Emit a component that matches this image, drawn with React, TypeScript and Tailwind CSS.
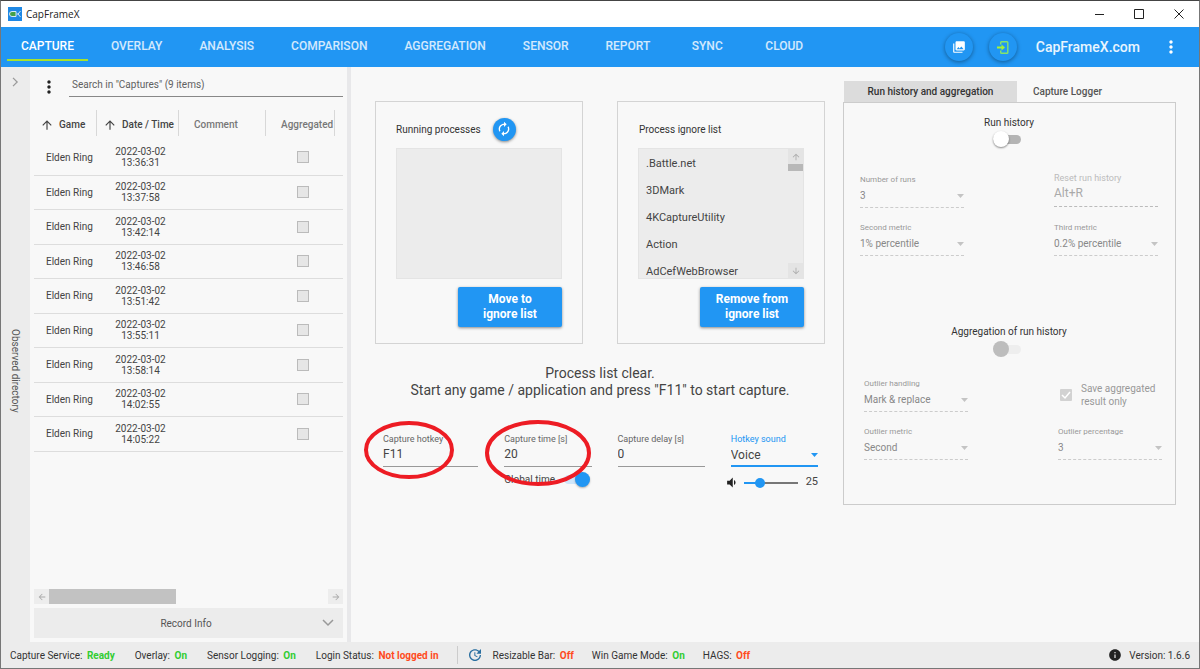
import React from "react";
import {
  MdArrowBack,
  MdArrowDownward,
  MdArrowForward,
  MdArrowUpward,
  MdAutorenew,
  MdInfo,
  MdMoreVert,
  MdPhotoLibrary,
  MdUpdate,
  MdVolumeDown,
} from "react-icons/md";

const tabs = ["Capture", "Overlay", "Analysis", "Comparison", "Aggregation", "Sensor", "Report", "Sync", "Cloud"];

const captureTimes = [
  "13:36:31",
  "13:37:58",
  "13:42:14",
  "13:46:58",
  "13:51:42",
  "13:55:11",
  "13:58:14",
  "14:02:55",
  "14:05:22",
];

const ignoreList = [".Battle.net", "3DMark", "4KCaptureUtility", "Action", "AdCefWebBrowser"];

const blueButton =
  "ml-auto mt-2 h-10 w-[104px] rounded-[2px] bg-[#2196f3] text-xs leading-[15px] font-bold text-white shadow-[0_1px_3px_rgba(0,0,0,0.45)]";

const roundButton =
  "flex size-7 items-center justify-center rounded-full bg-[#2196f3] shadow-[0_1px_4px_rgba(0,0,0,0.4)]";

function TitleBar() {
  return (
    <header className="flex h-[26px] shrink-0 items-center bg-white pr-[11px] pl-[7px]">
      <svg viewBox="0 0 28 28" className="size-[14px]" aria-hidden="true">
        <rect width="28" height="28" fill="#1e88e5" />
        <path d="M16 9H8a5 5 0 0 0 0 10h8" fill="#43a047" stroke="#d5e8f7" strokeWidth="2" />
        <path d="M16 9v10M17 14h3M25 8l-5 6 5 6" fill="none" stroke="#d5e8f7" strokeWidth="2" />
      </svg>
      <h1 className="ml-1 font-['Open_Sans',sans-serif] text-[10px] text-[#222]">CapFrameX</h1>
      <div className="ml-auto flex items-center gap-[22px] text-[#222]">
        <button aria-label="Minimize" className="flex size-[18px] items-center justify-center">
          <svg viewBox="0 0 10 10" className="size-[10px]" stroke="currentColor">
            <path d="M1 5.5h9" />
          </svg>
        </button>
        <button aria-label="Maximize" className="flex size-[18px] items-center justify-center">
          <svg viewBox="0 0 10 10" className="size-[10px]" fill="none" stroke="currentColor">
            <path d="M.5 .5h9v9h-9z" />
          </svg>
        </button>
        <button aria-label="Close" className="flex size-[18px] items-center justify-center">
          <svg viewBox="0 0 10 10" className="size-[10px]" stroke="currentColor">
            <path d="M.5 .5l9 9M9.500 .5l-9 9" />
          </svg>
        </button>
      </div>
    </header>
  );
}

function NavBar() {
  return (
    <nav className="flex h-10 shrink-0 items-center bg-[#2196f3] pr-[18px] pl-[6px] text-white">
      <div className="flex gap-[9px]">
        {tabs.map((tab, i) => (
          <button
            key={tab}
            className={`h-7 min-w-[68px] border-b-2 px-[14px] text-xs font-medium uppercase ${
              i === 0 ? "border-[#a6e22e]" : "border-transparent text-white/80"
            }`}
          >
            {tab}
          </button>
        ))}
      </div>
      <div className="ml-auto flex items-center">
        <button aria-label="Screenshots" className={roundButton}>
          <MdPhotoLibrary className="size-[14px]" />
        </button>
        <button aria-label="Login" className={`ml-4 text-[#a6f432] ${roundButton}`}>
          <svg viewBox="0 0 12 13" className="h-[13px] w-3" fill="none" stroke="currentColor">
            <path d="M3.700 3.500V1.500q0-.8.8-.8h5.500q.8 0 .8.8v10q0 .8-.8.8H4.500q-.8 0-.8-.8V9.500" stroke="#86e46a" strokeWidth="1.400" />
            <path d="M0 6.500h5.500" strokeWidth="2" />
            <path d="M4.500 3.500v6l3.500-3z" fill="currentColor" stroke="none" />
          </svg>
        </button>
        <a href="#site" className="ml-[19px] text-sm font-medium text-white/90">
          CapFrameX.com
        </a>
        <button aria-label="More" className="ml-[21px]">
          <MdMoreVert className="size-5" />
        </button>
      </div>
    </nav>
  );
}

function ColumnHead({ label, sorted, pad }: { label: string; sorted?: boolean; pad: string }) {
  return (
    <th className="p-0 font-medium">
      <div
        className={`flex h-[26px] items-center gap-[5px] border-r border-[#d8d8d8] pt-1 whitespace-nowrap ${pad} ${
          sorted ? "text-[#444]" : "text-[#777]"
        }`}
      >
        {sorted ? <MdArrowUpward className="size-[14px] shrink-0" /> : null}
        {label}
      </div>
    </th>
  );
}

function CaptureList() {
  return (
    <section className="flex w-[317px] shrink-0 flex-col px-1 pb-1">
      <div className="flex h-[30px] items-end pl-[5px]">
        <button aria-label="List options" className="text-[#222]">
          <MdMoreVert className="size-5" />
        </button>
        <input
          aria-label="Search captures"
          placeholder={'Search in "Captures" (9 items)'}
          className="ml-[10px] h-6 min-w-0 flex-1 border-b border-[#888] px-[3px] text-[10px] outline-none placeholder:text-[#606060]"
        />
      </div>
      <table className="mt-2 w-full table-fixed border-collapse text-[#444]">
        <colgroup>
          <col className="w-[63px]" />
          <col className="w-[82px]" />
          <col className="w-[87px]" />
          <col className="w-[69px]" />
          <col />
        </colgroup>
        <thead>
          <tr className="h-[35px] text-left text-[10px]">
            <ColumnHead label="Game" sorted pad="pl-[6px]" />
            <ColumnHead label="Date / Time" sorted pad="pl-[6px]" />
            <ColumnHead label="Comment" pad="pl-[15px]" />
            <ColumnHead label="Aggregated" pad="pl-[15px]" />
            <th />
          </tr>
        </thead>
        <tbody>
          {captureTimes.map((time) => (
            <tr key={time} className="border-b border-[#ddd] text-[10px] leading-[11px] odd:h-[35px] even:h-[34px]">
              <td className="p-0 pl-3">Elden Ring</td>
              <td className="p-0 pl-[5px] text-center">
                2022-03-02
                <br />
                {time}
              </td>
              <td />
              <td className="p-0 pl-[31px]">
                <input
                  type="checkbox"
                  aria-label={`Aggregated ${time}`}
                  className="block size-3 appearance-none border border-[#bbb] bg-[#e6e6e6]"
                />
              </td>
              <td />
            </tr>
          ))}
        </tbody>
      </table>
      <div className="mt-auto flex h-[15px] bg-[#f8f8f8] text-[#aaa]">
        <button aria-label="Scroll left" className="flex w-[15px] items-center justify-center bg-[#ededed]">
          <MdArrowBack className="size-[10px]" />
        </button>
        <div className="w-[127px] bg-[#c2c2c2]" />
        <button aria-label="Scroll right" className="ml-auto flex w-[15px] items-center justify-center bg-[#ededed]">
          <MdArrowForward className="size-[10px]" />
        </button>
      </div>
      <button className="mt-1 flex h-[30px] items-center bg-[#ececec] pr-[9px] pl-4 text-[10px] text-[#555]">
        <span className="flex-1">Record Info</span>
        <svg viewBox="0 0 12 8" className="h-2 w-3" fill="none" stroke="#999" strokeWidth="1.500">
          <path d="M1 1l5 5 5-5" />
        </svg>
      </button>
    </section>
  );
}

function RunningProcesses() {
  return (
    <section className="flex flex-col border border-[#d4d4d4] px-5 pt-3 pb-4">
      <div className="flex h-[30px] items-center gap-3">
        <h2 className="pt-px text-[10px] text-[#333]">Running processes</h2>
        <button
          aria-label="Refresh"
          className="flex size-[23px] items-center justify-center rounded-full bg-[#2196f3] text-white shadow-[0_1px_3px_rgba(0,0,0,0.45)]"
        >
          <MdAutorenew className="size-4" />
        </button>
      </div>
      <div className="mt-1 h-[131px] border border-[#e4e4e4] bg-[#ececec]" />
      <button className={blueButton}>
        Move to
        <br />
        ignore list
      </button>
    </section>
  );
}

function IgnoreList() {
  return (
    <section className="flex flex-col border border-[#d4d4d4] px-5 pt-3 pb-4">
      <h2 className="flex h-[30px] items-center pt-px pl-px text-[10px] text-[#333]">Process ignore list</h2>
      <div className="mt-1 flex h-[131px] overflow-hidden border border-[#e4e4e4] bg-[#ececec]">
        <ul className="flex-1 pt-[2px] pl-[7px] text-[11px] text-[#444]">
          {ignoreList.map((name) => (
            <li key={name} className="flex h-[27px] items-center">
              {name}
            </li>
          ))}
        </ul>
        <div className="flex w-[15px] flex-col text-[#aaa]">
          <button aria-label="Scroll up" className="flex h-[15px] items-center justify-center bg-[#e4e4e4]">
            <MdArrowUpward className="size-[10px]" />
          </button>
          <div className="h-[7px] bg-[#b8b8b8]" />
          <button aria-label="Scroll down" className="mt-auto flex h-[15px] items-center justify-center bg-[#e4e4e4]">
            <MdArrowDownward className="size-[10px]" />
          </button>
        </div>
      </div>
      <button className={blueButton}>
        Remove from
        <br />
        ignore list
      </button>
    </section>
  );
}

function TextField({ id, label, value }: { id: string; label: string; value: string }) {
  return (
    <div className="min-w-0">
      <label htmlFor={id} className="block text-[9px] leading-3 whitespace-nowrap text-[#666]">
        {label}
      </label>
      <input
        id={id}
        defaultValue={value}
        className="block h-[22px] w-full border-b border-[#999] pb-1 text-xs text-[#444] outline-none"
      />
    </div>
  );
}

// red marker drawn around a field
function Marker({ className, rx, ry }: { className: string; rx: number; ry: number }) {
  return (
    <svg
      className={`pointer-events-none absolute ${className}`}
      width={rx * 2 + 6}
      height={ry * 2 + 6}
      fill="none"
      stroke="#ed1c24"
      strokeWidth="4"
    >
      <ellipse cx={rx + 3} cy={ry + 3} rx={rx} ry={ry} />
    </svg>
  );
}

function CaptureSettings() {
  return (
    <div className="mt-[34px] grid grid-cols-[minmax(0,95fr)_minmax(0,87fr)_minmax(0,87fr)_minmax(0,87fr)] gap-[26px] pr-[7px] pl-2">
      <div className="relative">
        <TextField id="hotkey" label="Capture hotkey" value="F11" />
        <Marker className="-top-[13px] -left-5" rx={43} ry={27} />
      </div>
      <div className="relative">
        <TextField id="time" label="Capture time [s]" value="20" />
        <label className="mt-1 flex h-[17px] items-center justify-between pr-[2px] text-[10px] whitespace-nowrap text-[#444]">
          Global time
          <input
            type="checkbox"
            defaultChecked
            className="relative h-[9px] w-[26px] appearance-none rounded-full bg-[#cfe6fa] before:absolute before:-top-[3px] before:right-0 before:size-[15px] before:rounded-full before:bg-[#2196f3] before:shadow-[0_1px_2px_rgba(0,0,0,0.3)]"
          />
        </label>
        <Marker className="-top-[14px] -left-5" rx={51} ry={31} />
      </div>
      <TextField id="delay" label="Capture delay [s]" value="0" />
      <div>
        <label htmlFor="sound" className="block text-[9px] leading-3 whitespace-nowrap text-[#2196f3]">
          Hotkey sound
        </label>
        <div className="relative">
          <select
            id="sound"
            className="block h-[22px] w-full appearance-none border-b-2 border-[#2196f3] pb-px text-xs leading-4 text-[#444] outline-none"
          >
            <option>Voice</option>
          </select>
          <Caret className="text-[#2196f3]" />
        </div>
        <div className="mt-[7px] flex h-[17px] items-center text-[#222]">
          <MdVolumeDown className="-ml-[7px] size-[15px] shrink-0" />
          <input
            type="range"
            aria-label="Volume"
            defaultValue={25}
            className="mr-2 ml-[5px] h-[2px] min-w-0 flex-1 appearance-none bg-linear-to-r from-[#2196f3] from-25% to-[#777] to-25% [&::-webkit-slider-thumb]:size-[10px] [&::-webkit-slider-thumb]:appearance-none [&::-webkit-slider-thumb]:rounded-full [&::-webkit-slider-thumb]:bg-[#2196f3]"
          />
          <span className="text-[11px] text-[#444]">25</span>
        </div>
      </div>
    </div>
  );
}

function Caret({ className }: { className: string }) {
  return (
    <svg
      viewBox="0 0 7 4"
      className={`pointer-events-none absolute top-[8px] right-0 h-1 w-[7px] ${className}`}
      fill="currentColor"
      aria-hidden="true"
    >
      <path d="M0 0h7L3.500 4z" />
    </svg>
  );
}

function DisabledSelect({ id, label, value }: { id: string; label: string; value: string }) {
  return (
    <div className="w-[104px]">
      <label htmlFor={id} className="block text-[8px] leading-3 text-[#999]">
        {label}
      </label>
      <div className="relative">
        <select
          id={id}
          disabled
          className="block h-[22px] w-full appearance-none border-b border-dashed border-[#ccc] pb-px text-[10px] leading-[14px] text-[#888]"
        >
          <option>{value}</option>
        </select>
        <Caret className="text-[#c4c4c4]" />
      </div>
    </div>
  );
}

function HistoryPanel() {
  return (
    <aside>
      <div role="tablist" className="ml-px flex h-[21px] text-[10px] font-medium">
        <button role="tab" aria-selected="true" className="w-[173px] bg-[#dcdcdc] text-[#333]">
          Run history and aggregation
        </button>
        <button role="tab" aria-selected="false" className="px-4 text-[#555]">
          Capture Logger
        </button>
      </div>
      <div className="h-[403px] border border-[#ccc] pr-[17px] pl-4">
        <label className="flex flex-col items-center pt-3 text-[10px] leading-4 text-[#333]">
          Run history
          <input
            type="checkbox"
            className="relative mt-1 mr-[5px] h-[9px] w-7 appearance-none rounded-full bg-[#b4b4b4] before:absolute before:-top-[4px] before:left-0 before:size-4 before:rounded-full before:bg-white before:shadow-[0_1px_2px_rgba(0,0,0,0.45)]"
          />
        </label>
        <div className="mt-[30px] flex justify-between">
          <DisabledSelect id="runs" label="Number of runs" value="3" />
          <div className="w-[104px]">
            <label htmlFor="reset" className="block text-[9px] leading-[9px] text-[#bbb]">
              Reset run history
            </label>
            <input
              id="reset"
              disabled
              defaultValue="Alt+R"
              className="block h-6 w-full border-b border-dashed border-[#bbb] pb-[3px] text-xs text-[#aaa]"
            />
          </div>
        </div>
        <div className="mt-[14px] flex justify-between">
          <DisabledSelect id="second-metric" label="Second metric" value="1% percentile" />
          <DisabledSelect id="third-metric" label="Third metric" value="0.2% percentile" />
        </div>
        <label className="mt-[68px] flex flex-col items-center text-[10px] leading-4 text-[#333]">
          Aggregation of run history
          <input
            type="checkbox"
            disabled
            className="relative mt-[5px] mr-[5px] h-[9px] w-7 appearance-none rounded-full bg-[#eee] before:absolute before:-top-[4px] before:left-0 before:size-4 before:rounded-full before:bg-[#bdbdbd]"
          />
        </label>
        <div className="mt-6 -mr-1 ml-1 flex justify-between">
          <DisabledSelect id="outlier-handling" label="Outlier handling" value="Mark & replace" />
          <label className="flex w-[104px] items-center gap-[9px] pl-[2px] text-[10px] leading-[13px] text-[#999]">
            <span className="relative size-3 shrink-0">
              <input
                type="checkbox"
                disabled
                defaultChecked
                className="block size-3 appearance-none rounded-[1px] bg-[#d2d2d2]"
              />
              <svg viewBox="0 0 12 12" className="absolute inset-0" fill="none" stroke="#fff" strokeWidth="1.500">
                <path d="M2 6l3 3 5-6" />
              </svg>
            </span>
            <span>
              Save aggregated
              <br />
              result only
            </span>
          </label>
        </div>
        <div className="mt-[14px] -mr-1 ml-1 flex justify-between">
          <DisabledSelect id="outlier-metric" label="Outlier metric" value="Second" />
          <DisabledSelect id="outlier-percentage" label="Outlier percentage" value="3" />
        </div>
      </div>
    </aside>
  );
}

function Status({ label, value, good }: { label: string; value: string; good?: boolean }) {
  return (
    <span className="whitespace-nowrap">
      {label}: <b className={`ml-[2px] ${good ? "text-[#32cd32]" : "text-[#ff4a1c]"}`}>{value}</b>
    </span>
  );
}

function StatusBar() {
  return (
    <footer className="flex h-[26px] shrink-0 items-center bg-[#ececec] px-[9px] text-[10px] text-[#333]">
      <div className="flex gap-5">
        <Status label="Capture Service" value="Ready" good />
        <Status label="Overlay" value="On" good />
        <Status label="Sensor Logging" value="On" good />
        <Status label="Login Status" value="Not logged in" />
      </div>
      <div className="mr-[9px] ml-[18px] h-[18px] w-px bg-[#ccc]" />
      <MdUpdate className="mr-[10px] size-4 text-[#2a6fa0]" />
      <div className="flex gap-[18px]">
        <Status label="Resizable Bar" value="Off" />
        <Status label="Win Game Mode" value="On" good />
        <Status label="HAGS" value="Off" />
      </div>
      <div className="ml-auto flex items-center gap-[7px]">
        <MdInfo className="size-[14px] text-[#222]" />
        <span>Version: 1.6.6</span>
      </div>
    </footer>
  );
}

export default function App() {
  return (
    <div className="flex min-h-screen flex-col border border-t-[#444] border-r-[#777] border-b-[#777] border-l-[#777] bg-[#f8f8f8] font-[Roboto,sans-serif]">
      <TitleBar />
      <NavBar />
      <div className="flex flex-1">
        <div className="flex w-[29px] shrink-0 flex-col items-center bg-[#ececec] pt-[10px]">
          <button aria-label="Expand directory">
            <svg viewBox="0 0 8 12" className="h-[10px] w-[7px]" fill="none" stroke="#999" strokeWidth="1.500">
              <path d="M1 1l5 5-5 5" />
            </svg>
          </button>
          <div className="flex flex-1 items-center pt-3">
            <span className="text-[10px] text-[#555] [writing-mode:vertical-rl]">Observed directory</span>
          </div>
        </div>
        <CaptureList />
        <div className="w-1 shrink-0 bg-[#e8e8ea]" />
        <main className="grid flex-1 grid-cols-[450fr_333fr] gap-[18px] pr-[23px] pl-6">
          <div className="pt-[34px]">
            <div className="grid grid-cols-2 gap-[34px]">
              <RunningProcesses />
              <IgnoreList />
            </div>
            <p className="mt-[21px] text-center text-sm leading-[17px] text-[#444]">
              Process list clear.
              <br />
              Start any game / application and press "F11" to start capture.
            </p>
            <CaptureSettings />
          </div>
          <div className="pt-[14px]">
            <HistoryPanel />
          </div>
        </main>
      </div>
      <StatusBar />
    </div>
  );
}
